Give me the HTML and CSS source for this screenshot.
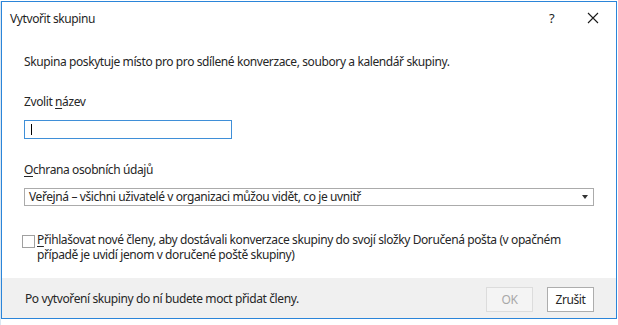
FILE: index.html
```html
<!DOCTYPE html>
<html lang="cs">
<head>
<meta charset="utf-8">
<title>Vytvořit skupinu</title>
<link rel="stylesheet" href="styles.css">
</head>
<body>
<div class="backdrop">
  <div class="dialog">
    <div class="titlebar">
      <span class="title">Vytvořit skupinu</span>
      <span class="help">?</span>
      <span class="close">
        <svg width="12" height="12" viewBox="0 0 12 12"><path d="M1 1 L11 11 M11 1 L1 11" stroke="#1a1a1a" stroke-width="1.1" fill="none"/></svg>
      </span>
    </div>
    <div class="content">
      <p class="desc">Skupina poskytuje místo pro pro sdílené konverzace, soubory a kalendář skupiny.</p>
      <label class="label label-name">Zvolit <u>n</u>ázev</label>
      <div class="input"><span class="caret"></span></div>
      <label class="label label-privacy"><u>O</u>chrana osobních údajů</label>
      <div class="select">
        <span class="select-text">Veřejná – všichni uživatelé v organizaci můžou vidět, co je uvnitř</span>
        <span class="arrow"></span>
      </div>
      <div class="check-row">
        <span class="checkbox"></span>
        <span class="check-text"><u>P</u>řihlašovat nové členy, aby dostávali konverzace skupiny do svojí složky Doručená pošta (v opačném<br>případě je uvidí jenom v doručené poště skupiny)</span>
      </div>
    </div>
    <div class="footer">
      <span class="footer-text">Po vytvoření skupiny do ní budete moct přidat členy.</span>
      <div class="buttons">
        <button class="btn btn-disabled">OK</button>
        <button class="btn">Zrušit</button>
      </div>
    </div>
  </div>
</div>
</body>
</html>
```
FILE: styles.css
```css
html, body {
  margin: 0;
  padding: 0;
  background: #ffffff;
  overflow: hidden;
}
body {
  width: 618px;
  height: 325px;
  font-family: "Noto Sans", "Open Sans", sans-serif;
  font-size: 12px;
  letter-spacing: -0.4px;
  color: #262626;
}
.backdrop {
  width: 618px;
  height: 325px;
  background: linear-gradient(to right, #d9e6f2 0, #d9e6f2 1px, #ffffff 1px);
}
.dialog {
  margin: 1px 0 0 1px;
  width: 614px;
  height: 316px;
  border: 1px solid #2b85d9;
  background: #ffffff;
  display: flex;
  flex-direction: column;
}
.titlebar {
  height: 32px;
  display: flex;
  align-items: center;
  padding-left: 8px;
  flex-shrink: 0;
}
.title {
  flex: 1;
  color: #1f1f1f;
}
.help {
  width: 12px;
  margin-right: 26px;
  color: #1f1f1f;
  font-size: 13px;
}
.close {
  display: flex;
  margin-right: 17px;
}
.content {
  flex: 1;
  padding-left: 22px;
  padding-right: 22px;
}
.desc {
  margin: 20px 0 0 0;
  line-height: 16px;
}
.label {
  display: block;
  line-height: 16px;
}
.label-name { margin-top: 24px; }
.label-privacy { margin-top: 23px; }
u { text-decoration-thickness: 1px; text-underline-offset: 2px; }
.input {
  margin-top: 10px;
  width: 200px;
  height: 17px;
  border: 1px solid #3f8fd8;
  display: flex;
  align-items: center;
  padding-left: 6px;
}
.caret {
  width: 1px;
  height: 11px;
  background: #000;
}
.select {
  margin-top: 10px;
  width: 564px;
  height: 16px;
  border: 1px solid #ababab;
  display: flex;
  align-items: center;
  padding-left: 4px;
}
.select-text {
  flex: 1;
  line-height: 16px;
}
.arrow {
  width: 0;
  height: 0;
  border-left: 3.5px solid transparent;
  border-right: 3.5px solid transparent;
  border-top: 4px solid #333;
  margin-right: 5px;
}
.check-row {
  margin-top: 27px;
  display: flex;
  align-items: flex-start;
  margin-left: -2px;
}
.checkbox {
  width: 11px;
  height: 11px;
  border: 1px solid #a0a0a0;
  margin-top: 2px;
  flex-shrink: 0;
}
.check-text {
  margin-left: 2px;
  line-height: 14.5px;
  white-space: nowrap;
}
.footer {
  height: 40px;
  background: #f0f0f0;
  display: flex;
  align-items: center;
  padding-left: 23px;
  padding-right: 22px;
  flex-shrink: 0;
}
.footer-text {
  flex: 1;
}
.buttons {
  display: flex;
  gap: 14px;
  padding-top: 2px;
}
.btn {
  font-family: inherit;
  font-size: 12px;
  letter-spacing: -0.4px;
  height: 25px;
  width: 47px;
  background: #ffffff;
  border: 1px solid #adadad;
  color: #262626;
  padding: 0;
}
.btn-disabled {
  color: #a8a8a8;
  border-color: #dcdcdc;
  background: #f4f4f4;
}
```
